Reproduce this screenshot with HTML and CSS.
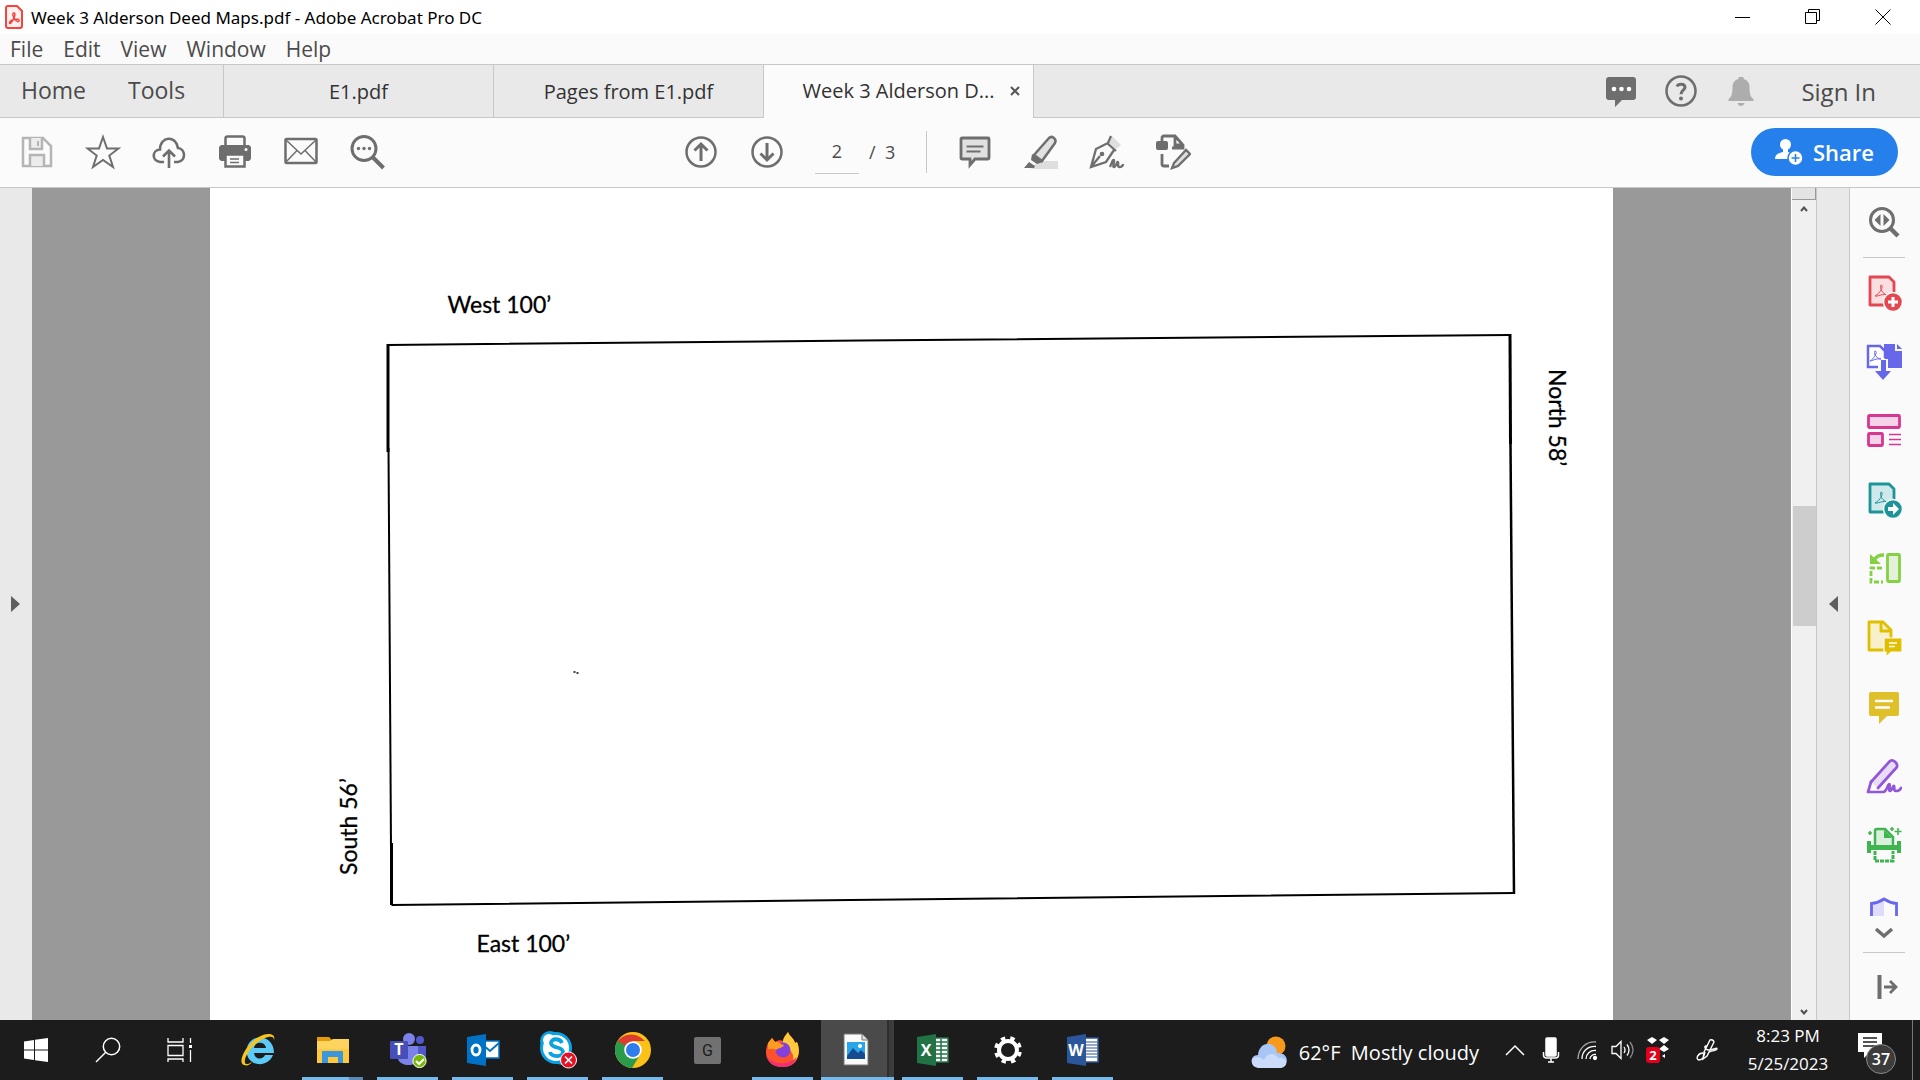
FILE: index.html
```
<!DOCTYPE html>
<html lang="en">
<head>
    <meta charset="UTF-8">
    <meta name="viewport" content="width=device-width, initial-scale=1.0">
    <title>Week 3 Alderson Deed Maps.pdf - Adobe Acrobat Pro DC</title>
    <link rel="stylesheet" href="styles.css">
</head>
<body>
    <header class="title-bar">
        <svg class="app-icon" width="20" height="26" viewBox="0 0 20 26" fill="none">
            <path d="M4 2h9l5 5v15a2 2 0 0 1-2 2H4a2 2 0 0 1-2-2V4a2 2 0 0 1 2-2z" fill="#fff1f0" stroke="#f8423c" stroke-width="2"/>
            <path d="M10 9c-2 0-1 3 0 5s4 5 5 3-3-2-5-1.500-5 2-4.500 3.500 2.500-1 4-4 2-6 .5-6z" stroke="#f8423c" stroke-width="1.500"/>
        </svg>
        <span class="title-text">Week 3 Alderson Deed Maps.pdf - Adobe Acrobat Pro DC</span>
        <div class="window-controls">
            <button aria-label="Minimize"><svg width="16" height="16" viewBox="0 0 16 16"><path d="M0 8.500h15" stroke="#000"/></svg></button>
            <button aria-label="Restore"><svg width="16" height="16" viewBox="0 0 16 16" fill="none" stroke="#000"><path d="M.5 3.500h11v11H.5zM3.500 3V.5h11v11h-3"/></svg></button>
            <button aria-label="Close"><svg width="16" height="16" viewBox="0 0 16 16"><path d="M.5.5l15 15M15.500.5l-15 15" stroke="#000"/></svg></button>
        </div>
    </header>

    <nav class="menu-bar">
        <button>File</button>
        <button>Edit</button>
        <button>View</button>
        <button>Window</button>
        <button>Help</button>
    </nav>

    <div class="tab-bar">
        <div class="main-tabs">
            <button>Home</button>
            <button>Tools</button>
        </div>
        <button class="tab">E1.pdf</button>
        <button class="tab">Pages from E1.pdf</button>
        <div class="tab active">
            <button class="tab-name">Week 3 Alderson D...</button>
            <button class="tab-close" aria-label="Close tab"><svg width="10" height="10" viewBox="0 0 10 10"><path d="M1 1l8 8M9 1l-8 8" stroke="#555" stroke-width="2"/></svg></button>
        </div>
        <div class="account">
            <button aria-label="Messages">
                <svg width="32" height="32" viewBox="0 0 32 32"><path d="M4 2h24a3 3 0 0 1 3 3v17a3 3 0 0 1-3 3H17l-7 7v-7H4a3 3 0 0 1-3-3V5a3 3 0 0 1 3-3z" fill="#6e6e6e"/><g fill="#fff"><circle cx="9" cy="14" r="2.300"/><circle cx="16.500" cy="14" r="2.300"/><circle cx="24" cy="14" r="2.300"/></g></svg>
            </button>
            <button aria-label="Help">
                <svg width="32" height="32" viewBox="0 0 32 32" fill="none" stroke="#6e6e6e"><circle cx="16" cy="16" r="14.500" stroke-width="2.500"/><path d="M12 11.500c1-3 8-3.500 8 .8 0 3-4 3-4 7" stroke-width="3"/><circle cx="16" cy="23.500" r="2" fill="#6e6e6e" stroke="none"/></svg>
            </button>
            <button aria-label="Notifications">
                <svg width="32" height="32" viewBox="0 0 32 32" fill="#adadad"><path d="M13.500 2h5v2c4 1 6 4 6 8 0 7 1 10 4 12v2h-25v-2c3-2 4-5 4-12 0-4 2-7 6-8zM12.500 28h7c-1 4-6 4-7 0z"/></svg>
            </button>
            <a class="sign-in" href="#">Sign In</a>
        </div>
    </div>

    <div class="toolbar">
        <div class="tool-group">
            <button aria-label="Save"><svg width="34" height="34" viewBox="0 0 34 34" fill="none" stroke="#b5b5b5" stroke-width="2.500"><path d="M3 3h20l8 8v20H3z"/><path d="M10 3v11h12V3M10 31V20h14v11" fill="#ececec"/><path d="M18 6v5" stroke-width="2"/></svg></button>
            <button aria-label="Star"><svg width="36" height="36" viewBox="0 0 36 36" fill="none" stroke="#6e6e6e" stroke-width="2"><path d="M18 3l4 11.500h11.500L24.300 21.500 28 33l-10-7-10 7 3.700-11.500L2.500 14.500H14z"/></svg></button>
            <button aria-label="Upload"><svg width="34" height="34" viewBox="0 0 34 34" fill="none" stroke="#6e6e6e" stroke-width="2.600"><path d="M12 27H8C-.5 26-.2 15 8 14.500 8 1 24 0 26 13c8 1 8 13 0 14h-4M17 33V16M11 21.500l6-6 6 6"/></svg></button>
            <button aria-label="Print"><svg width="34" height="34" viewBox="0 0 34 34"><path d="M7.500 13V3.500A2 2 0 0 1 9.500 1.500h15a2 2 0 0 1 2 2V13" fill="#fbfbfb" stroke="#6e6e6e" stroke-width="2.500"/><path d="M3 10h28l2 2v12l-2 2H3l-2-2V12z" fill="#6e6e6e"/><path d="M7.500 19.500h19v12h-19z" fill="#fbfbfb" stroke="#6e6e6e" stroke-width="2.500"/><path d="M12 24h9M12 27.500h9" stroke="#6e6e6e" stroke-width="1.500"/><circle cx="28" cy="14.500" r="1.500" fill="#fff"/></svg></button>
            <button aria-label="Email"><svg width="34" height="34" viewBox="0 0 34 34" fill="none" stroke="#6e6e6e"><rect x="1.500" y="4" width="31" height="24" rx="1" stroke-width="2.500"/><path d="M2 5l15 14L32 5M2 27l11-11.500M32 27L21 15.500" stroke-width="1.500"/></svg></button>
            <button aria-label="Find"><svg width="36" height="36" viewBox="0 0 36 36" fill="none" stroke="#6e6e6e"><circle cx="15" cy="14.500" r="12" stroke-width="3"/><path d="M23.500 23l11 11" stroke-width="4"/><g fill="#6e6e6e" stroke="none"><circle cx="9.500" cy="14.500" r="1.700"/><circle cx="15" cy="14.500" r="1.700"/><circle cx="20.500" cy="14.500" r="1.700"/></g></svg></button>
        </div>
        <div class="tool-group page-tools">
            <button aria-label="Previous page"><svg width="34" height="34" viewBox="0 0 34 34" fill="none" stroke="#6e6e6e"><circle cx="17" cy="17" r="14.500" stroke-width="2.500"/><path d="M17 26V10M10.500 15.500L17 9l6.500 6.500" stroke-width="3"/></svg></button>
            <button aria-label="Next page"><svg width="34" height="34" viewBox="0 0 34 34" fill="none" stroke="#6e6e6e"><circle cx="17" cy="17" r="14.500" stroke-width="2.500"/><path d="M17 8v16M10.500 18.500L17 25l6.500-6.500" stroke-width="3"/></svg></button>
            <input class="page-number" type="text" value="2" aria-label="Page number">
            <span class="page-total">/&nbsp; 3</span>
            <span class="divider"></span>
            <button aria-label="Comment"><svg width="34" height="34" viewBox="0 0 34 34" stroke="#6e6e6e"><path d="M4 3h26a1 1 0 0 1 1 1v19a1 1 0 0 1-1 1H17l-5 6v-6H4a1 1 0 0 1-1-1V4a1 1 0 0 1 1-1z" fill="#e1e1e1" stroke-width="2.800"/><path d="M8.500 11.500h17M8.500 16.500h14" stroke-width="1.800"/></svg></button>
            <button aria-label="Highlight"><svg width="36" height="36" viewBox="0 0 36 36"><path d="M15 27h20v8H8z" fill="#dedede"/><path d="M11 21L26 4c3-3 8 1 6 5L19 27z" fill="#e1e1e1" stroke="#6e6e6e" stroke-width="2.500"/><path d="M9 20l11 8-6 2-6-4zM6 28l6 4-1 2H1z" fill="#6e6e6e"/></svg></button>
            <button aria-label="Sign"><svg width="36" height="36" viewBox="0 0 36 36" fill="none" stroke="#6e6e6e" stroke-width="2.300"><path d="M20 9l3-7 9 9-5 4z" fill="#dedede" stroke="none"/><path d="M18 9l9 8M22 2l-3 7L7 15 2 33l15-5 8-12M2 33l9-11"/><circle cx="13" cy="20" r="1.200"/><path d="M21 33c2-5 3-8 4-7s-2 7 0 7 3-6 4-5-1 5 1 5 4-1 4-3"/></svg></button>
            <button aria-label="Edit"><svg width="36" height="36" viewBox="0 0 36 36" fill="none" stroke="#6e6e6e" stroke-width="2.800"><rect x="1" y="7" width="12" height="9" rx="2" fill="#6e6e6e" stroke="none"/><path d="M7 7V4a2 2 0 0 1 2-2h11l8 9v3H17M20 2v9h8M7 20v10a2 2 0 0 0 2 2h5"/><path d="M19 29L31 16l4 4-12 12-6 2z" stroke-width="2.300" fill="#dedede"/></svg></button>
        </div>
        <button class="share">
            <svg width="28" height="28" viewBox="0 0 28 28"><circle cx="10.500" cy="6.500" r="5.500" fill="#fff"/><path d="M8 10h5v4c4 1 6 3 6 7H0c0-4 3-6 8-7z" fill="#fff"/><circle cx="20.500" cy="20" r="7.500" fill="#fff" stroke="#2680eb" stroke-width="1.500"/><path d="M20.500 16v8M16.500 20h8" stroke="#2680eb" stroke-width="1.600"/></svg>
            Share
        </button>
    </div>

    <main class="workspace">
        <button class="side-toggle" aria-label="Open navigation pane"><svg width="10" height="16" viewBox="0 0 10 16"><path d="M0 0l9 8-9 8z" fill="#5e5e5e"/></svg></button>
        <div class="viewer">
            <svg class="page" viewBox="0 0 1402 832" fill="none">
                <g stroke="#000" stroke-linejoin="miter">
                    <path d="M177 157L650 152.500 1299 147" stroke-width="2"/>
                    <path d="M177.500 156v108" stroke-width="3"/>
                    <path d="M178 260L180.500 660" stroke-width="2"/>
                    <path d="M181 655v62" stroke-width="3"/>
                    <path d="M181 717L640 712 1304 705" stroke-width="2"/>
                    <path d="M1299.500 146l.5 110" stroke-width="3"/>
                    <path d="M1300 256L1303.500 706" stroke-width="2.500"/>
                    <path d="M363 484h2M366 485h2" stroke-width="1.500"/>
                </g>
                <g class="map-label">
                    <text x="237" y="125">West 100’</text>
                    <text x="266" y="764">East 100’</text>
                    <text transform="translate(146 687) rotate(-90)">South 56’</text>
                    <text transform="translate(1338 181) rotate(90)">North 58’</text>
                </g>
            </svg>
        </div>
        <div class="scrollbar">
            <span class="splitter"></span>
            <svg class="arrow" width="8" height="6" viewBox="0 0 8 6"><path d="M1 5l3-3.500L7 5" fill="none" stroke="#505050" stroke-width="2"/></svg>
            <div class="track"><span class="thumb"></span></div>
            <svg class="arrow" width="8" height="6" viewBox="0 0 8 6"><path d="M1 1l3 3.500L7 1" fill="none" stroke="#505050" stroke-width="2"/></svg>
        </div>
        <button class="side-toggle right" aria-label="Close tools pane"><svg width="10" height="16" viewBox="0 0 10 16"><path d="M10 0L1 8l9 8z" fill="#5e5e5e"/></svg></button>
        <aside class="tools-pane">
            <button class="pane-search" aria-label="Search tools"><svg width="32" height="32" viewBox="0 0 32 32"><circle cx="14" cy="14" r="11.500" fill="none" stroke="#6e6e6e" stroke-width="3"/><path d="M22 22l8 8" stroke="#6e6e6e" stroke-width="4.500"/><path d="M12.500 8v12l-6-6zM15.500 8v12l6-6z" fill="#6e6e6e"/></svg></button>
            <hr>
            <div class="tool-list">
                <button aria-label="Create PDF"><svg width="36" height="36" viewBox="0 0 36 36"><path d="M4 2h19l5 5v23H4z" fill="#f9dfe0" stroke="#e34850" stroke-width="2.800" stroke-linejoin="round"/><path d="M15 10c3 0 0 8-6 11 2 1 8-3 14-1-4 1-10-5-8-10z" fill="none" stroke="#e34850"/><circle cx="27" cy="27" r="9.500" fill="#e34850" stroke="#fafafa" stroke-width="1.500"/><path d="M27 22v10M22 27h10" stroke="#fff" stroke-width="3"/></svg></button>
                <button aria-label="Combine files"><svg width="36" height="36" viewBox="0 0 36 36"><path d="M18 0h11v7h7v17H22v-9h-4z" fill="#6767ec"/><path d="M31 0l5 5h-5z" fill="#6767ec"/><path d="M12 23H2V2h12l5 5v7" fill="#fff" stroke="#6767ec" stroke-width="2.500"/><path d="M9 7c3 0 0 7-5 10 2 0 6-3 11-2-3 0-8-4-6-8z" fill="none" stroke="#6767ec"/><path d="M15 16h5v11h5l-8 9-8-9h6z" fill="#6767ec"/></svg></button>
                <button aria-label="Organize pages"><svg width="36" height="36" viewBox="0 0 36 36" fill="#f6d3e8" stroke="#d83790" stroke-width="2.800"><rect x="2.500" y="2.500" width="31" height="12" rx="1"/><rect x="2.500" y="20.500" width="14" height="12" rx="1"/><path d="M23 21.500h12M23 26.500h12M23 31.500h12" stroke-width="1.500"/></svg></button>
                <button aria-label="Export PDF"><svg width="36" height="36" viewBox="0 0 36 36"><path d="M4 2h19l5 5v23H4z" fill="#cfe8e9" stroke="#1b959a" stroke-width="2.800" stroke-linejoin="round"/><path d="M15 10c3 0 0 8-6 11 2 1 8-3 14-1-4 1-10-5-8-10z" fill="none" stroke="#1b959a"/><circle cx="27" cy="27" r="9.500" fill="#1b959a" stroke="#fafafa" stroke-width="1.500"/><path d="M22 25h5v-4l6 6-6 6v-4h-5z" fill="#fff"/></svg></button>
                <button aria-label="Scan pages"><svg width="36" height="36" viewBox="0 0 36 36" fill="none" stroke="#85d044" stroke-width="2.800"><rect x="21.500" y="3.500" width="12" height="27" rx="1" fill="#e3f1d8"/><path d="M16 17H5v14h12" stroke-dasharray="5 2"/><path d="M18 4c-5 0-7 1-10 5" stroke-width="3.500"/><path d="M4 3v10h11z" fill="#85d044" stroke="none"/></svg></button>
                <button aria-label="Send for comments"><svg width="36" height="36" viewBox="0 0 36 36"><path d="M3 2h14l8 8v20H3z" fill="#f7f0cb" stroke="#dfbf00" stroke-width="2.800" stroke-linejoin="round"/><path d="M15 2v9h10" fill="none" stroke="#dfbf00" stroke-width="2.800"/><path d="M18 18h18v14H25l-5 5v-5h-2z" fill="#dfbf00" stroke="#fafafa" stroke-width="1.200"/><path d="M23 23h8M23 26.500h6" stroke="#fff" stroke-width="1.500"/></svg></button>
                <button aria-label="Comment"><svg width="36" height="36" viewBox="0 0 36 36"><path d="M5 3h26a2 2 0 0 1 2 2v20a2 2 0 0 1-2 2H21l-8 8v-8H5a2 2 0 0 1-2-2V5a2 2 0 0 1 2-2z" fill="#dfbf2a"/><path d="M9 12h18M9 18.500h15" stroke="#fff" stroke-width="2.500"/></svg></button>
                <button aria-label="Fill and sign"><svg width="36" height="36" viewBox="0 0 36 36" fill="none" stroke="#9256d9" stroke-width="2.700" stroke-linejoin="round" stroke-linecap="round"><path d="M5 24L24 3c3-2 8 2 7 6L12 30" fill="#e9dcf6"/><path d="M5 24L2 34h15c4 0 5-8 6-8 2 0-1 7 1 7s3-6 4-5c1 1-1 5 2 5 2 0 4-1 5-3"/></svg></button>
                <button aria-label="Scan and OCR"><svg width="36" height="36" viewBox="0 0 36 36"><path d="M9 18V4a2 2 0 0 1 2-2h8l8 8v8" fill="#d7efdc" stroke="#3fb550" stroke-width="2.500"/><path d="M18 3v8h8M1 14h4v4h26v-4h4v12h-4v-3H5v3H1z" fill="#3fb550"/><path d="M9 24v10h18V24" fill="none" stroke="#3fb550" stroke-width="3" stroke-dasharray="4 1"/><path d="M4 4v4M2 6h4M26 0v4M24 2h4M32 1v7M28.500 4.500h7" stroke="#3fb550" stroke-width="1.600"/></svg></button>
                <button class="cut" aria-label="Protect"><svg width="36" height="36" viewBox="0 0 36 36"><path d="M5 36V8c6 0 10-2 13-4v32z" fill="#dedcfa"/><path d="M5.500 36V7.500C11 7 15 5 18 3c3 2 7 4 12.500 4.500V36" fill="none" stroke="#6767ec" stroke-width="2.800"/></svg></button>
            </div>
            <button class="more" aria-label="More tools"><svg width="20" height="12" viewBox="0 0 20 12"><path d="M2 2l8 7 8-7" fill="none" stroke="#6e6e6e" stroke-width="3.500"/></svg></button>
            <hr>
            <button class="collapse" aria-label="Collapse pane"><svg width="24" height="26" viewBox="0 0 24 26" fill="none" stroke="#6e6e6e"><path d="M4.500 1v24" stroke-width="4"/><path d="M9 13h11M15 7l6 6-6 6" stroke-width="2.800"/></svg></button>
        </aside>
    </main>

    <footer class="taskbar">
        <div class="system-buttons">
            <button aria-label="Start"><svg width="24" height="24" viewBox="0 0 24 24" fill="#fff"><path d="M0 3.500L10 2v9.500H0zM11 1.800L24 0v11.500H11zM0 12.500h10V22L0 20.500zM11 12.500h13V24l-13-1.800z"/></svg></button>
            <button aria-label="Search"><svg width="26" height="26" viewBox="0 0 26 26" fill="none" stroke="#fff" stroke-width="1.500"><circle cx="16.500" cy="9.500" r="8.200"/><path d="M11 15L1 25"/></svg></button>
            <button aria-label="Task view"><svg width="26" height="26" viewBox="0 0 26 26" fill="none" stroke="#fff" stroke-width="1.300"><path d="M1 8.500h15v10H1zM1 1v4h15V1M1 25v-3h15v3M23.500 1v5M23.500 13v12"/><path d="M22 8h3v3h-3z" fill="#fff" stroke="none"/></svg></button>
        </div>
        <div class="apps">
            <button aria-label="Internet Explorer"><svg width="36" height="36" viewBox="0 0 36 36"><path d="M33 23c-3 8-12 11-19 8C5 27 4 14 12 8c9-6 22-1 22 13H14c1 7 9 7 11 2zM14 16h12c-1-7-11-7-12 0z" fill="#5ccbf8"/><path d="M4 33C-5 30 11 3 28 2c6 0 7 3 6 6 0-3-2-4-6-3C15 8 3 25 5 31c1 2 4 1 7-1-2 3-5 4-8 3z" fill="#f7c51e"/></svg></button>
            <button class="open grouped" aria-label="File Explorer"><svg width="36" height="36" viewBox="0 0 36 36"><path d="M2 5h12l3 3v5H2z" fill="#e39b0b"/><path d="M2 9h13l3-2h16v24H2z" fill="#ffd45e"/><path d="M2 17h32v14H2z" fill="#ffc83d"/><path d="M7 31V20a1 1 0 0 1 1-1h19a1 1 0 0 1 1 1v11h-5v-6H13v6z" fill="#3a96dd"/></svg></button>
            <button class="open" aria-label="Teams"><svg width="38" height="36" viewBox="0 0 38 36"><circle cx="20" cy="7" r="6" fill="#7b83eb"/><circle cx="31" cy="8" r="4" fill="#5059c9"/><path d="M22 14h15v12c-2 5-8 5-10 0z" fill="#5059c9"/><path d="M9 14h20v13c-2 8-17 8-20 0z" fill="#7b83eb"/><rect x="1" y="9" width="18" height="18" rx="1" fill="#464eb8"/><text class="logo-small" x="10" y="23">T</text><circle cx="30.500" cy="29" r="6.600" fill="#76b900" stroke="#fff"/><path d="M27 29l3 3 5-5" fill="none" stroke="#fff" stroke-width="2"/></svg></button>
            <button class="open" aria-label="Outlook"><svg width="36" height="36" viewBox="0 0 36 36"><path d="M18 9h16v17H18z" fill="#fff" stroke="#0072c6" stroke-width="1.500"/><path d="M18 13l7 6 9-8" fill="none" stroke="#0072c6" stroke-width="2"/><path d="M2 5l19-3v32L2 31z" fill="#0072c6"/><ellipse cx="11" cy="18" rx="4" ry="5" fill="none" stroke="#fff" stroke-width="2.800"/></svg></button>
            <button class="open" aria-label="Skype"><svg width="40" height="40" viewBox="0 0 40 40"><circle cx="12" cy="11" r="10" fill="#0ba1e2"/><circle cx="24" cy="25" r="10" fill="#0ba1e2"/><circle cx="18" cy="18" r="14.500" fill="#fff" stroke="#0ba1e2" stroke-width="3"/><circle cx="11" cy="10" r="6" fill="#fff"/><path d="M24 13c-2-5-11-5-11 0 0 6 12 3 12 9 0 6-12 5-13 0" fill="none" stroke="#0ba1e2" stroke-width="3.800"/><circle cx="30.500" cy="30" r="8" fill="#e81123" stroke="#fff"/><path d="M27 26.500l7 7M34 26.500l-7 7" stroke="#fff" stroke-width="1.700"/></svg></button>
            <button class="open" aria-label="Chrome"><svg width="36" height="36" viewBox="0 0 36 36"><circle cx="18" cy="18" r="18" fill="#fbc116"/><path d="M18 18H34A18 18 0 0 0 2.400 9L10 22z" fill="#dd3d2f"/><path d="M34 9H18v9h17z" fill="#fbc116"/><path d="M2.400 9A18 18 0 0 0 17 36l8-13-7-5z" fill="#2a9b4b"/><circle cx="18" cy="18" r="8.800" fill="#fff"/><circle cx="18" cy="18" r="7" fill="#2f7cec"/></svg></button>
            <button aria-label="G"><span class="g-tile">G</span></button>
            <button class="open" aria-label="Firefox"><svg width="36" height="36" viewBox="0 0 36 36"><path d="M3 11l4-5 3 4c3-2 6-2 8-1 1-5 4-7 5-9 2 5 6 6 7 11l2-1c4 10 2 24-13 25C2 36-2 22 3 11z" fill="#ff522b"/><path d="M18 9c1-5 4-7 5-9 2 5 6 6 7 11l2-1c5 12-1 19-5 21 3-6 1-14-9-16z" fill="#ffc93b"/><path d="M1 22c3 9 15 11 23 8 3-1 6-3 8-5-3 7-8 10-14 10C8 35 2 29 1 22z" fill="#f52c78"/><circle cx="18" cy="18" r="7.500" fill="#8540dc"/><path d="M3 11l4-5 3 4c4-1 6 3 9 3-1 3-6 3-8 5-3-2-6 0-8-1z" fill="#ff9b21"/></svg></button>
            <button class="open current" aria-label="Photos"><svg width="26" height="34" viewBox="0 0 26 34"><path d="M1 1h18l6 6v25H1z" fill="#fafafa" stroke="#777"/><path d="M19 1v6h6" fill="#ddd" stroke="#777"/><path d="M4 9h18v17H4z" fill="#29a5e9"/><path d="M4 23l6-8 5 5 3-3 4 4v5H4z" fill="#174b91"/><circle cx="17" cy="13" r="2" fill="#fff"/></svg></button>
            <button class="open" aria-label="Excel"><svg width="36" height="36" viewBox="0 0 36 36"><path d="M19 6h14v24H19z" fill="#fff" stroke="#217346" stroke-width="1.500"/><path d="M20 10h12M20 14h12M20 18h12M20 22h12M20 26h12M26 7v22" stroke="#217346" stroke-width="1.500"/><path d="M2 5l19-3v32L2 31z" fill="#217346"/><text class="logo-letter" x="11" y="24">X</text></svg></button>
            <button class="open" aria-label="Settings"><svg width="30" height="30" viewBox="0 0 30 30" fill="none" stroke="#fff"><circle cx="15" cy="15" r="9" stroke-width="4"/><circle cx="15" cy="15" r="12.200" stroke-width="3.500" stroke-dasharray="4.400 5.182" stroke-dashoffset="-2"/></svg></button>
            <button class="open" aria-label="Word"><svg width="36" height="36" viewBox="0 0 36 36"><path d="M19 6h14v24H19z" fill="#fff" stroke="#2b579a" stroke-width="1.500"/><path d="M20 10h12M20 13h12M20 16h12M20 19h12M20 22h12M20 25h12" stroke="#2b579a" stroke-width="1.200"/><path d="M2 5l19-3v32L2 31z" fill="#2b579a"/><text class="logo-letter" x="11" y="24">W</text></svg></button>
        </div>
        <div class="tray">
            <button class="weather">
                <svg width="36" height="36" viewBox="0 0 36 36"><circle cx="25" cy="12" r="9.500" fill="#f79a1c"/><path d="M7 33C-2 32-1 21 7 21 8 7 25 6 26 19c12-1 13 13 3 14z" fill="#a9c5f5"/><path d="M7 34c-8-1-8-11-1-11 4 0 5 2 7 3 3-8 12-7 14-2 10-2 11 9 3 10z" fill="#cbdcfa"/></svg>
                62°F&nbsp; Mostly cloudy
            </button>
            <button aria-label="Hidden icons"><svg width="20" height="12" viewBox="0 0 20 12"><path d="M1 11l9-9 9 9" fill="none" stroke="#fff" stroke-width="1.500"/></svg></button>
            <button aria-label="Microphone"><svg width="18" height="26" viewBox="0 0 18 26" fill="none" stroke="#fff" stroke-width="1.500"><rect x="4" y="1" width="10" height="18" rx="1" fill="#fff"/><path d="M1.500 15v3q0 3 3 3h9q3 0 3-3v-3M9 21v4M6 25h6"/></svg></button>
            <button aria-label="Wi-Fi"><svg width="22" height="22" viewBox="0 0 22 22" fill="none" stroke="#fff" stroke-width="1.300"><path d="M2 20C2 10 10 2 20 3" stroke="#aaa"/><path d="M6 20C6 12 12 7 20 7.500M10 20c0-5 4-9 10-8.500M14 20c0-3 3-5 6-4.500"/><circle cx="19" cy="19" r="1.500" fill="#fff"/></svg></button>
            <button aria-label="Volume"><svg width="24" height="20" viewBox="0 0 24 20" fill="none" stroke="#fff" stroke-width="1.300"><path d="M1 6.500h4l5-5v17l-5-5H1zM13 7q2 3 0 6M16 4.500q4 5.500 0 11"/><path d="M19 2q6 8 0 16" stroke="#888"/></svg></button>
            <button aria-label="Dropbox"><svg width="26" height="28" viewBox="0 0 26 28"><path d="M6 1l5 3-5 4-5-4zM18 1l5 3-5 4-5-4zM18 9l5 4-5 3-5-3zM16 20l3-2v4z" fill="#fff"/><rect x="0" y="11" width="14" height="16" rx="3" fill="#e3001b"/><text class="badge-text" x="7" y="24">2</text></svg></button>
            <button class="pen" aria-label="Pen"><svg width="22" height="24" viewBox="0 0 22 24" fill="none" stroke="#fff" stroke-width="1.400"><path d="M8 14L14 2q3-1 4 2L11 18l-4 3zM11 8c-3-1-3 3 1 4 6 0 9-3 9-1-1 2-3 1-8 3M7 15c-5 0-8 6-4 7 4 0 5-4 6-8"/></svg></button>
            <div class="clock"><span>8:23 PM</span><span>5/25/2023</span></div>
            <button class="notifications" aria-label="Notifications"><svg width="24" height="26" viewBox="0 0 24 26"><path d="M0 0h24v19H12l-6 6v-6H0z" fill="#fff"/><path d="M5 5h14M5 9h14M5 13h14" stroke="#1c1c1c" stroke-width="1.300"/></svg><span class="badge">37</span></button>
            <span class="show-desktop"></span>
        </div>
    </footer>
</body>
</html>
```
FILE: styles.css
```
* {
    box-sizing: border-box;
}
body {
    margin: 0;
    height: 100vh;
    display: flex;
    flex-direction: column;
    overflow: hidden;
    font-family: "Open Sans", "Noto Sans", sans-serif;
    font-size: 18px;
    color: #4b4b4b;
    background: #fafafa;
}
button {
    display: flex;
    align-items: center;
    justify-content: center;
    flex-shrink: 0;
    margin: 0;
    padding: 0;
    border: 0;
    background: none;
    color: inherit;
    font: inherit;
    white-space: nowrap;
}
svg {
    display: block;
    flex-shrink: 0;
}

/* title and menu */
.title-bar {
    display: flex;
    align-items: center;
    height: 34px;
    padding: 0 2px 0 4px;
    background: #fff;
}
.title-text {
    margin-left: 7px;
    font-family: "Noto Sans", sans-serif;
    font-size: 17px;
    color: #000;
}
.window-controls {
    display: flex;
    margin-left: auto;
}
.window-controls button {
    width: 70px;
    height: 34px;
}
.menu-bar {
    display: flex;
    gap: 20px;
    height: 30px;
    padding-left: 10px;
    font-size: 21px;
}

/* tabs */
.tab-bar {
    display: flex;
    height: 54px;
    background: #e9e9e9;
    border-top: 1px solid #c8c8c8;
    border-bottom: 1px solid #c8c8c8;
}
.main-tabs {
    display: flex;
    gap: 42px;
    width: 223px;
    padding: 0 0 2px 21px;
    font-size: 23px;
}
.tab {
    width: 270px;
    border-left: 1px solid #c8c8c8;
    font-size: 20px;
    color: #323232;
}
.tab.active {
    position: relative;
    display: flex;
    justify-content: center;
    width: 271px;
    height: 53px;
    padding-bottom: 2px;
    border-right: 1px solid #c8c8c8;
    background: #fbfbfb;
}
.tab-close {
    position: absolute;
    top: 0;
    right: 13px;
    height: 52px;
}
.account {
    display: flex;
    align-items: center;
    margin-left: auto;
    padding-right: 44px;
}
.account button {
    width: 60px;
    height: 52px;
}
.sign-in {
    margin-left: 30px;
    font-size: 24px;
    color: #4b4b4b;
    text-decoration: none;
}

/* toolbar */
.toolbar {
    display: flex;
    align-items: center;
    height: 70px;
    padding: 0 22px 2px 4px;
    background: #fbfbfb;
    border-bottom: 1px solid #c8c8c8;
}
.tool-group {
    display: flex;
    align-items: center;
}
.tool-group button {
    width: 66px;
    height: 48px;
}
.page-tools {
    margin-left: 268px;
}
.page-number {
    width: 44px;
    height: 44px;
    margin-left: 15px;
    padding: 0;
    border: 0;
    border-bottom: 1px solid #c8c8c8;
    background: none;
    color: #4b4b4b;
    font: inherit;
    text-align: center;
}
.page-total {
    width: 57px;
    margin-left: 10px;
}
.divider {
    width: 1px;
    height: 42px;
    margin-right: 15px;
    background: #c8c8c8;
}
.share {
    gap: 10px;
    width: 147px;
    height: 48px;
    margin-left: auto;
    border-radius: 24px;
    background: #2680eb;
    color: #fff;
    font-size: 22px;
    font-weight: 600;
}

/* document area */
.workspace {
    flex: 1;
    display: flex;
    min-height: 0;
}
.side-toggle {
    width: 32px;
    background: #e9e9e9;
}
.side-toggle.right {
    width: 34px;
    border-left: 1px solid #c8c8c8;
    border-right: 1px solid #c8c8c8;
}
.viewer {
    flex: 1;
    min-width: 0;
    padding: 0 178px;
    background: #999;
}
.page {
    width: 100%;
    height: 100%;
    background: #fff;
}
.map-label {
    fill: #000;
    stroke: #000;
    stroke-width: 0.3px;
    font-family: Lato, sans-serif;
    font-size: 23px;
}
.scrollbar {
    display: flex;
    flex-direction: column;
    align-items: center;
    width: 25px;
    padding-bottom: 5px;
    background: #f0f0f0;
    border-left: 1px solid #fff;
}
.splitter {
    width: 24px;
    height: 12px;
    margin-bottom: 6px;
    background: #e3e3e3;
    border-right: 1px solid #999;
    border-bottom: 1px solid #999;
}
.track {
    flex: 1;
    display: flex;
    flex-direction: column;
    width: 23px;
}
.track::before {
    content: "";
    flex: 10;
}
.track::after {
    content: "";
    flex: 13;
}
.thumb {
    height: 120px;
    background: #cdcdcd;
}

/* right hand tools */
.tools-pane {
    display: flex;
    flex-direction: column;
    align-items: center;
    width: 70px;
    padding: 18px 2px 0 0;
    background: #fafafa;
}
.tools-pane hr {
    width: 42px;
    height: 1px;
    margin: 0;
    border: 0;
    background: #c8c8c8;
}
.pane-search {
    height: 32px;
    margin-bottom: 19px;
}
.tool-list {
    flex: 1;
    display: flex;
    flex-direction: column;
    gap: 33px;
    min-height: 0;
    margin-top: 17px;
    overflow: hidden;
}
.more {
    height: 12px;
    margin: 11px 0 13px;
}
.collapse {
    height: 67px;
    padding-left: 6px;
}

/* taskbar */
.taskbar {
    display: flex;
    height: 60px;
    background: #1c1c1c;
    color: #fff;
}
.system-buttons,
.apps,
.tray {
    display: flex;
}
.system-buttons button {
    width: 72px;
}
.apps {
    margin-left: 4px;
}
.apps button {
    position: relative;
    width: 75px;
}
.open::after {
    content: "";
    position: absolute;
    left: 7px;
    right: 7px;
    bottom: 0;
    height: 3px;
    background: #76b9ed;
}
.grouped::after {
    border-right: 14px solid #5a8ab4;
}
.apps .current {
    padding-right: 4px;
    background: linear-gradient(90deg, #1c1c1c 1px, #4a4a4a 1px, #4a4a4a 67px, #2e2e2e 67px, #2e2e2e 69px, #3c3c3c 69px, #3c3c3c 74px, #1c1c1c 74px);
}
.current::after {
    left: 1px;
    right: 1px;
}
.g-tile {
    width: 27px;
    height: 27px;
    border-radius: 2px;
    background: #717171;
    color: #1c1c1c;
    font-family: Roboto, sans-serif;
    font-size: 16px;
    line-height: 27px;
}
.logo-letter,
.logo-small,
.badge-text {
    fill: #fff;
    font-size: 16px;
    font-weight: 700;
    text-anchor: middle;
}
.badge-text {
    font-size: 13px;
}
.tray {
    align-items: center;
    margin-left: auto;
}
.tray button {
    width: 36px;
    height: 60px;
}
.tray .weather {
    gap: 12px;
    width: auto;
    margin-right: 18px;
    padding-top: 4px;
    font-size: 20px;
}
.tray .pen {
    margin-left: 12px;
}
.clock {
    display: flex;
    flex-direction: column;
    align-items: center;
    width: 116px;
    padding-left: 10px;
    font-size: 17px;
    line-height: 28px;
}
.tray .notifications {
    position: relative;
    justify-content: flex-start;
    width: 54px;
    padding: 0 0 8px 17px;
}
.badge {
    position: absolute;
    left: 25px;
    bottom: 6px;
    width: 30px;
    height: 30px;
    border: 1px solid #888;
    border-radius: 50%;
    background: #3c3c3c;
    font-size: 16px;
    font-weight: 600;
    line-height: 28px;
    text-align: center;
}
.show-desktop {
    width: 8px;
    height: 60px;
    margin-left: 17px;
    border-left: 1px solid #777;
}
```
